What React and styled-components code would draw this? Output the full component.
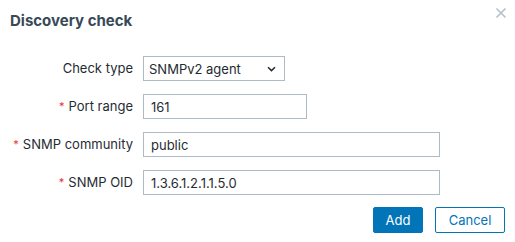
import React from "react";
import styled, { createGlobalStyle } from "styled-components";

const Global = createGlobalStyle`
  html, body { margin: 0; padding: 0; background: #ffffff; }
  body { font-family: Inter, "Noto Sans", sans-serif; color: #1f2c33; }
  * { box-sizing: border-box; }
`;

const Dialog = styled.div`
  width: 515px;
  height: 242px;
  background: #ffffff;
  position: relative;
  display: flex;
  flex-direction: column;
`;

const Header = styled.div`
  padding: 12px 10px 0 10px;
  height: 56px;
`;

const Title = styled.h4`
  margin: 0;
  font-size: 15px;
  line-height: 18px;
  font-weight: 700;
  color: #384a57;
`;

const CloseButton = styled.button`
  position: absolute;
  top: 7px;
  right: 8px;
  width: 12px;
  height: 12px;
  padding: 0;
  border: 0;
  background: transparent;
  display: flex;
  align-items: center;
  justify-content: center;
`;

const Form = styled.div`
  display: grid;
  grid-template-columns: 133px 1fr;
  column-gap: 10px;
  row-gap: 13px;
  align-items: center;
  padding-right: 10px;
`;

const Label = styled.label`
  text-align: right;
  font-size: 13px;
  line-height: 25px;
  color: #1f2c33;
  white-space: nowrap;
`;

const Asterisk = styled.span`
  color: #e33734;
  font-size: 11px;
  margin-right: 4px;
  vertical-align: 1px;
`;

const Field = styled.div`
  display: flex;
`;

const Input = styled.input`
  width: ${(p) => p.$w}px;
  height: 25px;
  border: 1px solid #acbbc4;
  border-radius: 0;
  padding: 0 7px;
  font-family: Inter, "Noto Sans", sans-serif;
  font-size: 13px;
  color: #1f2c33;
  background: #ffffff;
  outline: none;
`;

const Select = styled.div`
  width: ${(p) => p.$w}px;
  height: 25px;
  border: 1px solid #acbbc4;
  padding: 0 8px 0 5px;
  font-size: 13px;
  color: #1f2c33;
  display: flex;
  align-items: center;
  justify-content: space-between;
`;

const Footer = styled.div`
  display: flex;
  justify-content: flex-end;
  gap: 12px;
  padding: 12px 10px 0 10px;
`;

const Button = styled.button`
  height: 26px;
  width: ${(p) => p.$w}px;
  padding: 0;
  border-radius: 2px;
  font-family: Inter, "Noto Sans", sans-serif;
  font-size: 13px;
  border: 1px solid #0275b8;
  background: ${(p) => (p.$primary ? "#0275b8" : "#ffffff")};
  color: ${(p) => (p.$primary ? "#ffffff" : "#0275b8")};
`;

const Req = () => <Asterisk>*</Asterisk>;

export default function App() {
  return (
    <>
      <Global />
      <Dialog>
        <Header>
          <Title>Discovery check</Title>
        </Header>
        <CloseButton aria-label="Close">
          <svg width="12" height="12" viewBox="0 0 12 12">
            <path d="M1.5 1.5 L10.5 10.5 M10.5 1.5 L1.5 10.5" stroke="#b5c1c8" strokeWidth="1.6" fill="none" />
          </svg>
        </CloseButton>
        <Form>
          <Label>Check type</Label>
          <Field>
            <Select $w={142}>
              <span>SNMPv2 agent</span>
              <svg width="9" height="6" viewBox="0 0 9 6">
                <path d="M1 1.2 L4.5 4.6 L8 1.2" stroke="#1f2c33" strokeWidth="1.5" fill="none" />
              </svg>
            </Select>
          </Field>
          <Label><Req />Port range</Label>
          <Field><Input $w={164} defaultValue="161" /></Field>
          <Label><Req />SNMP community</Label>
          <Field><Input $w={297} defaultValue="public" /></Field>
          <Label><Req />SNMP OID</Label>
          <Field><Input $w={297} defaultValue="1.3.6.1.2.1.1.5.0" /></Field>
        </Form>
        <Footer>
          <Button $primary $w={50}>Add</Button>
          <Button $w={70}>Cancel</Button>
        </Footer>
      </Dialog>
    </>
  );
}
